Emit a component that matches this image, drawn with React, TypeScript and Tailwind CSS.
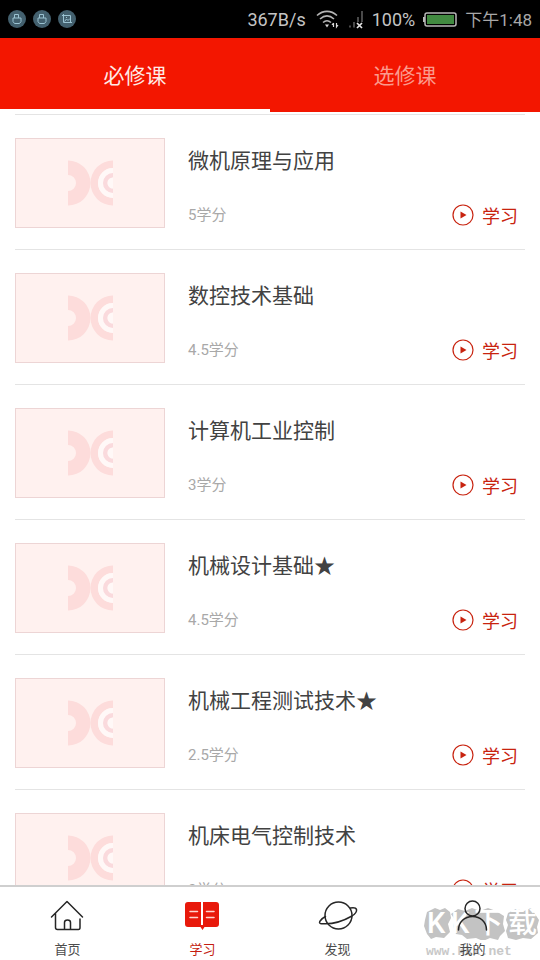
import { useState } from 'react';
import clsx from 'clsx';

const tabs = ['必修课', '选修课'];

const courses = [
  { name: '微机原理与应用', credit: '5' },
  { name: '数控技术基础', credit: '4.5' },
  { name: '计算机工业控制', credit: '3' },
  { name: '机械设计基础★', credit: '4.5' },
  { name: '机械工程测试技术★', credit: '2.5' },
  { name: '机床电气控制技术', credit: '3' },
];

export default function App() {
  return (
    <div className="flex h-screen flex-col bg-white font-['Roboto','Noto_Sans_CJK_SC',sans-serif]">
      <StatusBar />
      <CourseTabs />
      <main className="min-h-0 flex-1 overflow-y-auto px-[15px] pt-0.5 [scrollbar-width:none]">
        <ul className="border-t border-[#e4e4e4]">
          {courses.map((course) => (
            <CourseItem key={course.name} {...course} />
          ))}
        </ul>
      </main>
      <BottomNav />
    </div>
  );
}

const StatusBar = () => {
  return (
    <header className="flex h-[38px] shrink-0 items-center justify-between bg-black px-2 text-lg text-[#c4c4c4]">
      <div className="flex gap-[7px]">
        <NoticeIcon>
          <path d="M6.5 8V4.5h4V8M5 8h8v3.5L11.500 13.500h-5L5 11.500z" />
        </NoticeIcon>
        <NoticeIcon>
          <path d="M6.5 8V4.5h4V8M5 8h8v3.5L11.500 13.500h-5L5 11.500z" />
        </NoticeIcon>
        <NoticeIcon>
          <path d="M5.5 4v8.500H14M4 5.500h8.500V13M6.500 11.500l2-2.500 1.500 1.500 2-2M8 7.500h1" />
        </NoticeIcon>
      </div>
      <div className="flex items-center pt-0.5">
        <span>367B/s</span>
        <svg className="ml-2.5" width="24" height="20" viewBox="0 0 24 20" fill="none" stroke="#b4b4b4" strokeWidth="1.6">
          <path d="M1 5.500C7 0 15 0 21 5.500M4 9c4.500-4 9.500-4 14 0M7 12.500c2.500-2.200 5.500-2.200 8 0" />
          <path d="M9 14.500h4l-2 3z" fill="#d8d8d8" stroke="none" />
          <path d="M17.500 13v4M16 15l1.500-2M20.500 13v4l1.500-2" stroke="#d8d8d8" strokeWidth="1.2" />
        </svg>
        <svg className="ml-2" width="16" height="20" viewBox="0 0 16 20" fill="none" stroke="#5c5c5c" strokeWidth="1.6">
          <path d="M2 15.500v2M6 12v5.500M10 7v5M14 1v11" />
          <path d="m9 13 5 5m0-5-5 5" stroke="#e4e4e4" strokeWidth="1.7" />
        </svg>
        <span className="ml-2">100%</span>
        <svg className="ml-2" width="34" height="16" viewBox="0 0 34 16">
          <rect x="2" y="1" width="31" height="13" rx="2" fill="#000" stroke="#b8b8b8" strokeWidth="1.5" />
          <path d="M0 5h2v5H0z" fill="#b8b8b8" />
          <rect x="4" y="3" width="27" height="9" fill="#418a40" />
        </svg>
        <span className="ml-2 text-[17px] text-[#a8a8a8]">下午1:48</span>
      </div>
    </header>
  );
};

const NoticeIcon = ({ children }: { children: React.ReactNode }) => {
  return (
    <svg width="18" height="18" viewBox="0 0 18 18" fill="none" stroke="#9bc3d2" strokeWidth="1">
      <circle cx="9" cy="9" r="9" fill="#43606e" stroke="none" />
      {children}
    </svg>
  );
};

const CourseTabs = () => {
  const [active, setActive] = useState(tabs[0]);

  return (
    <div role="tablist" className="flex h-[74px] shrink-0 bg-[#f31600]">
      {tabs.map((tab) => (
        <button
          key={tab}
          type="button"
          role="tab"
          aria-selected={tab === active}
          onClick={() => setActive(tab)}
          className={clsx(
            'flex-1 border-b-3 pt-1.5 text-[21px]',
            tab === active ? 'border-white text-[#ffeae6]' : 'border-transparent text-[#fb9a8d]',
          )}
        >
          {tab}
        </button>
      ))}
    </div>
  );
};

const CourseItem = ({ name, credit }: { name: string; credit: string }) => {
  return (
    <li className="flex border-b border-[#e4e4e4] pt-[23px] pb-[21px]">
      <div className="flex h-[90px] w-[150px] shrink-0 items-center justify-center border border-[#edd5d5] bg-[#fff1ef]">
        <CoverLogo />
      </div>
      <div className="ml-[23px] flex flex-1 flex-col justify-between pt-[7px]">
        <h2 className="text-[21px] leading-8 text-[#424242]">{name}</h2>
        <div className="flex items-center justify-between pr-[7px]">
          <span className="text-[15px] leading-[26px] text-[#a8a8a8]">{credit}学分</span>
          <button type="button" className="flex items-center gap-2 text-lg text-[#c8230f]">
            <svg width="22" height="22" viewBox="0 0 22 22" fill="none" stroke="#c8230f" strokeWidth="1.2">
              <circle cx="11" cy="11" r="10" />
              <path d="m8.500 7.500 6 3.500-6 3.500z" fill="#c8230f" stroke="none" />
            </svg>
            <span className="pt-1 leading-[22px]">学习</span>
          </button>
        </div>
      </div>
    </li>
  );
};

const CoverLogo = () => {
  return (
    <svg width="46" height="46" viewBox="-1 0 46 46" fill="none">
      <path d="M0 .5a22.500 22.500 0 0 1 0 45V31a8 8 0 0 0 0-16z" fill="#fddcdb" />
      <path d="M45 .5a22.500 22.500 0 0 0 0 45V38a15 15 0 0 1 0-30z" fill="#fddcdb" />
      <path d="M45 8a15 15 0 0 0 0 30v-5a10 10 0 0 1 0-20z" fill="#fff8f7" />
      <path d="M45 13a10 10 0 0 0 0 20v-4.500a5.500 5.500 0 0 1 0-11z" fill="#fadadd" />
      <path d="M45 17.500a5.500 5.500 0 0 0 0 11z" fill="#fff8f7" />
    </svg>
  );
};

const BottomNav = () => {
  return (
    <nav className="relative flex h-[75px] shrink-0 border-t-2 border-[#cfcfcf] bg-white">
      <Watermark />
      <NavItem label="首页">
        <path d="M2.500 18 18 2.500 33.500 18M6.500 14v14.500q0 2 2 2h21q1.500 0 1.500-2V20M15.500 30.500v-7q0-2.500 3-2.500t3 2.500v7" />
      </NavItem>
      <NavItem label="学习" active>
        <path
          d="M4 3h13v23h2V3h13q3 0 3 3v19q0 3-3 3H20.500l-2 3-2-3H4q-3 0-3-3V6q0-3 3-3z"
          fill="#e8190b"
          stroke="none"
        />
        <path d="M6 12.500h7.500M6 18.500h7.500M22.500 12.500H30M22.500 18.500H30" stroke="#ffd5cf" strokeWidth="1.5" />
      </NavItem>
      <NavItem label="发现">
        <circle cx="19.500" cy="16.500" r="13.500" />
        <path d="M6.500 17.500C.5 20.500-1.500 25 3 24.700c11 .8 21-2.500 30-7.700 3-2 5-4.500 4.500-6.500-.5-1.500-3-2-6-1.500" />
      </NavItem>
      <NavItem label="我的">
        <circle cx="18.500" cy="9.500" r="7.500" />
        <path d="M4.500 31c0-8 6-13.500 14-13.500s14 5.500 14 13.500" />
      </NavItem>
    </nav>
  );
};

const NavItem = ({
  label,
  active,
  children,
}: {
  label: string;
  active?: boolean;
  children: React.ReactNode;
}) => {
  return (
    <a
      href="#"
      className={clsx(
        'relative flex flex-1 flex-col items-center gap-[7px] pt-3 text-[13px] leading-5',
        active ? 'text-[#c41c10]' : 'text-[#4c4c4c]',
      )}
    >
      <svg
        className="overflow-visible"
        width="38"
        height="34"
        viewBox="0 0 38 34"
        fill="none"
        stroke="#262626"
        strokeWidth="1.5"
        strokeLinecap="round"
        strokeLinejoin="round"
      >
        {children}
      </svg>
      {label}
    </a>
  );
};

const Watermark = () => {
  return (
    <div className="absolute right-0 bottom-0 w-[116px]">
      <div className="relative">
        <svg className="block" width="116" height="34" viewBox="0 0 116 34" fill="#c3c3c3">
          <path d="m3 6 8-4 5 2 5-2 5 4 1 6-3 6 2 8-6 6-8-1-5 2-4-5-3-8 1-6z" />
          <path d="m27 8 7-5 7 2 7-3 8 3 8-3 8 3 8 5-1 8 2 7-5 5-2 4-8-2-7 3-7-3-9 1-5-4-6-1-3-8 2-6z" />
          <path d="m84 7 8-4 8 2 7-3 4 6 4 6-2 7 1 6-7 6-8-1-7 2-8-2-2-7 2-6-2-5z" />
        </svg>
        <div className="absolute inset-0 grid grid-cols-[24px_23px_34px_1fr] items-center pl-[3px] text-[29px] leading-none font-medium text-white">
          <span>K</span>
          <span>K</span>
          <span>下</span>
          <span>载</span>
        </div>
      </div>
      <p className="pt-1 pl-0.5 font-['Liberation_Mono',monospace] text-[13px] leading-4 font-bold text-[#c8c8c8]">
        www.kkx.net
      </p>
    </div>
  );
};
